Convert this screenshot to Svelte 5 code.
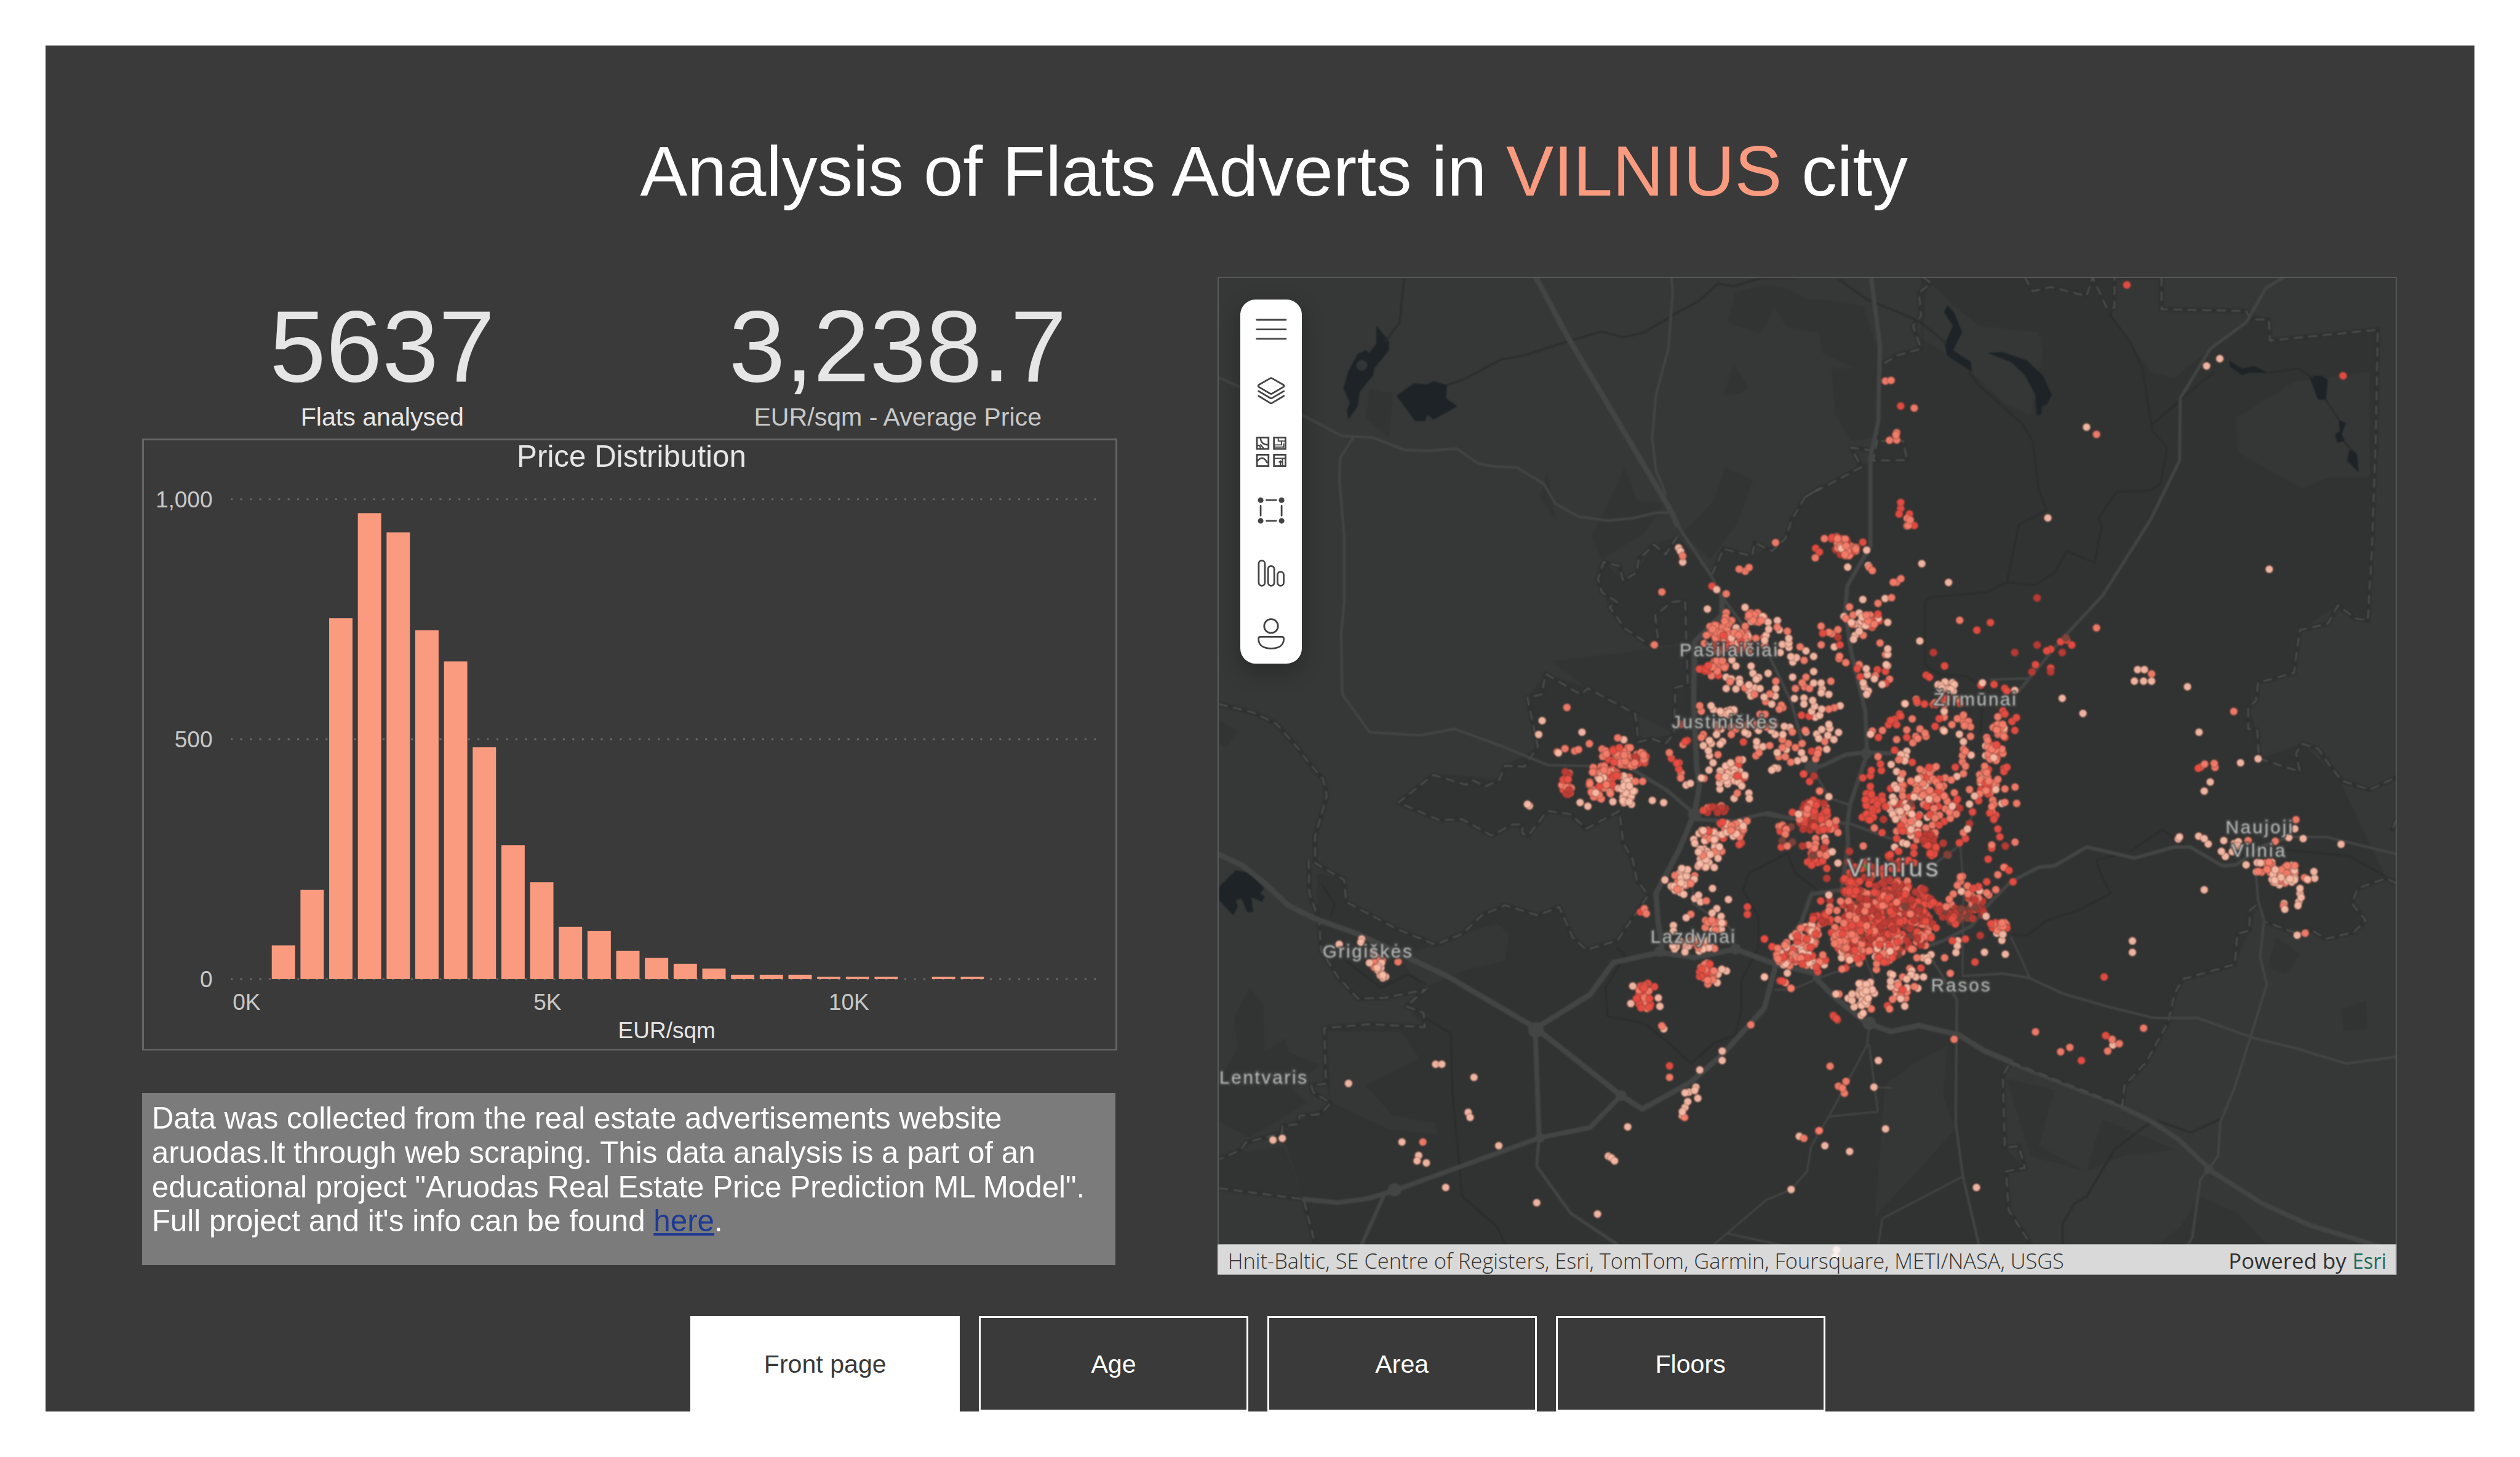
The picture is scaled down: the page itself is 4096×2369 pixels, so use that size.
<script>
  // ---- Histogram -------------------------------------------------------
  const bins = [70, 186, 752, 971, 931, 727, 662, 483, 279, 202, 109, 100, 59, 44, 32, 22, 9, 9, 9, 5, 5, 5, 0, 5, 5];
  const baseY = 890.5;
  const scaleY = 0.7905;
  const bars = bins
    .map((n, i) => ({ x: 213.5 + i * 47.27, h: n * scaleY }))
    .filter((b) => b.h > 0);
  const yTicks = [
    { label: '1,000', y: 100 },
    { label: '500', y: 495.3 },
    { label: '0', y: 890.5 }
  ];
  const xTicks = [
    { label: '0K', x: 172 },
    { label: '5K', x: 667.5 },
    { label: '10K', x: 1164 }
  ];

  // ---- Map geometry ----------------------------------------------------
  // Coordinates are digitised per sheet; "k<n>" switches the active sheet.
  const sheets = {
    4: [2000, 450, 1.568, 1.8447],
    5: [2950, 450, 1.5223, 1.8447],
    6: [2000, 1250, 1.568, 1.8023],
    7: [2950, 1250, 1.5223, 1.8023],
    10: [2900, 1150, 3, 2.8509],
    11: [2650, 850, 3, 3]
  };
  const place = (k, x, y) => {
    const [ox, oy, sx, sy] = sheets[k];
    return [ox + x / sx, oy + y / sy];
  };
  const read = (text) => {
    let k = 4;
    const out = [];
    for (const t of text.trim().split(/\s+/)) {
      if (t[0] === 'k') k = +t.slice(1);
      else {
        const [x, y] = t.split(',').map(Number);
        out.push(place(k, x, y));
      }
    }
    return out;
  };
  const line = (text) => read(text).map((p) => p[0].toFixed(1) + ',' + p[1].toFixed(1)).join(' ');

  const city = line(`k5 325,12 325,230 225,280 215,560 35,680 k4 1525,680 1475,805 1388,860 1315,838 1285,915 1195,800
    1135,825 1090,910 1055,935 1005,878 990,930 1020,1015 1060,1080 1130,1135 1222,1125 1222,1250 1190,1260 1187,1400 1095,1425
    1087,1340 965,1262 855,1218 808,1290 835,1440 750,1500 735,1540 k6 565,42 475,130 580,182 640,180 715,228 770,195 810,228 860,155
    920,165 960,208 1045,155 1055,250 1090,360 1120,405 1040,540 960,567 925,530 890,440 835,465 750,435 690,465 640,520 570,552
    470,505 340,425 335,360 265,340 265,480 275,570 320,650 370,712 545,685 495,735 543,797 283,800 288,965 300,1022 175,1110
    230,1308 260,1442 k7 600,1442 545,1340 538,1225 585,1215 535,1155 530,940 550,900 830,1030 835,970 890,900 945,780 960,700
    980,655 1112,610 1148,510 1165,435 1190,485 1340,525 1410,515 1440,480 1405,430 1420,385 1490,355 k5 1370,1530 1280,1430
    1172,1475 1168,1390 1145,1320 1170,1245 1260,1215 1275,1085 1370,1010 1445,1055 1455,850 1470,172 1200,205 1197,142 1140,115
    928,110 928,12`);

  const darkPatches = [
    'k4 1345,60 1420,35 1475,45 1540,85 1530,170 1480,165 1445,105 1410,185 1325,150',
    'k4 1320,590 1390,630 1350,760 1280,870 1210,790 1290,690',
    'k4 1340,275 1378,345 1360,365 1315,372',
    'k4 1060,590 1090,690 1160,700 1110,790 1000,870 975,800 1020,690',
    'k4 860,600 880,750 840,680',
    'k4 870,1180 1220,1130 1220,1250 1187,1400 1090,1340 960,1260',
    'k4 400,350 460,365 450,500 390,440',
    'k4 12,1360 60,1390 30,1440 12,1430',
    'k5 0,80 80,80 180,100 215,230 210,500 150,510 110,430 100,290 160,290 75,240 70,180 0,170',
    'k6 90,680 125,730 130,870 185,830 190,870 270,910 200,980 240,1020 90,1125 12,1075 12,950 60,860 50,770',
    'k7 540,950 660,985 620,1150 740,1225 780,1070 900,1130 960,1160 830,1180 740,1225 600,1180',
    'k7 1440,720 1445,800 1385,810 1380,740',
    'k7 1215,530 1275,580 1240,640 1195,620',
    'k7 1025,1300 1120,1350 1190,1442 920,1442 975,1390',
    'k6 180,1150 230,1308 12,1275 12,1180'
  ].map(line);

  const lightPatches = [
    'k5 1115,440 1260,330 1450,300 1450,620 1350,620 1280,655 1200,600 1120,545',
    'k5 810,20 928,20 928,110 1140,115 1150,140 1050,230 960,320 900,300 850,210 805,130',
    'k5 340,20 400,90 470,160 620,180 630,240 600,430 540,400 450,300 330,200',
    'k7 390,850 380,1000 410,1100 350,1180 210,1360 235,970 300,910 360,870',
    'k6 390,970 530,890 480,810 290,810 300,1020 450,1100 575,1115 570,1080 460,1060',
    'k6 730,490 760,520 750,600 640,630 545,680 470,590 570,552 640,520'
  ].map(line);

  const lakes = [
    'k4 418,160 450,205 450,235 412,290 410,310 375,360 370,405 345,445 342,415 350,395 333,350 345,300 370,245 390,235 400,242 418,215',
    'k4 470,372 515,335 550,338 565,328 600,340 598,380 627,405 565,445 550,430 543,450 518,450',
    'k5 392,98 408,120 428,180 405,235 450,270 452,300 390,250 385,215 405,160 382,118',
    'k5 490,242 530,240 590,265 630,310 653,370 640,400 628,405 626,430 614,430 612,370 585,310 550,270',
    'k5 1097,265 1130,290 1160,282 1195,303 1150,302 1130,310 1100,285',
    'k5 1298,312 1330,312 1345,325 1340,385 1320,385',
    'k5 1372,445 1390,455 1380,490 1388,510 1368,515 1363,490 1375,480',
    'k5 1400,530 1418,550 1422,605 1393,570',
    'k6 12,380 55,330 90,340 128,385 118,400 130,410 122,425 95,410 100,455 85,455 70,415 55,420 60,440 48,465 12,420'
  ].map(line);

  const streams = [
    'k4 490,12 478,150 440,210',
    'k4 600,340 650,320 740,262 800,250 900,212 1000,177 1055,195 1110,180 1180,130 1250,85 1300,32 1340,40 1410,15 1500,14',
    'k5 120,20 190,80 320,145 390,215',
    'k5 445,300 470,340 580,460 605,510 620,660 640,720 570,765 540,940 610,948 660,910 690,845 760,880 778,770 770,745 815,665 900,660 925,640 942,530 905,480 880,290 850,210 800,130 805,100',
    'k5 905,460 1000,360 1060,300',
    'k5 540,940 490,970 345,985 335,1000 335,1190 370,1220 440,1225 480,1260 475,1400',
    'k5 1195,303 1270,290 1310,320',
    'k5 1340,385 1375,450',
    'k5 1385,510 1405,540',
    'k7 820,285 765,300 775,340 800,400 720,450 640,480 590,525 550,520',
    'k7 850,275 930,210 990,262',
    'k7 1240,270 1400,290 1490,350',
    'k7 900,1080 810,1160 740,1300 710,1320 680,1380 680,1442',
    'k7 920,1075 1000,1110 1075,1070',
    'k6 545,770 610,815 615,1000 640,1300 730,1390 750,1442',
    'k6 1040,560 1060,585 1010,680 1015,765 1110,785 1170,840 1230,905 1290,845 1345,820 1360,750 1360,660 1405,560 1405,470 1365,390 1380,340 1480,280 1500,340 1568,400',
    'k6 275,370 310,430 300,470',
    'k6 340,600 430,680 500,640 545,670'
  ].map(line);

  const roads = [
    [9, 'k4 830,12 910,190 1180,725 1195,765'],
    [5, 'k4 1195,765 1285,925 1310,985'],
    [9, 'k4 1310,985 1310,1040 1240,1120 1237,1300 1245,1500 k6 1252,80 1240,160 1200,270 1140,400 1145,480 1155,560'],
    [5, 'k11 565,410 700,590 790,690 900,920 950,1110'],
    [4, 'k4 1180,12 1183,60 1172,230 1140,370 1130,500 1140,600 1165,670'],
    [4, 'k4 12,318 225,430 330,495 410,500 490,537 550,540 625,533 680,578 725,588 780,590 850,640 880,700 940,740 1015,752 1080,745 1140,728 1175,728'],
    [4, 'k4 358,500 325,560 322,620 335,800 335,1000 327,1100 330,1280 400,1395 530,1405 620,1385 740,1437 860,1495 970,1498'],
    [7, 'k5 200,12 222,220 218,450 198,560 198,830 140,950 135,1030 150,1150 185,1330 190,1460 k10 440,500 425,600 430,680 400,900 250,920 200,1050 90,1200 70,1260'],
    [5, 'k5 1235,12 1190,45 1140,150 1050,230 975,380 973,570 900,750 780,980 680,1110 570,1270'],
    [4, 'k5 590,1232 500,1235'],
    [9, 'k6 1345,565 1450,610 1560,640 k7 60,650 110,710 190,785 250,810 320,792 420,820 480,865 550,900'],
    [5, 'k7 550,905 830,1035'],
    [8, 'k7 830,1035 900,1075 970,1130 1060,1230 1180,1320 1300,1385 1480,1450'],
    [6, 'k7 480,450 550,365 620,322 660,318 740,262 860,295 960,262 1000,262 1080,318 1115,315 1180,260 1250,232'],
    [4, 'k7 1250,232 1340,232 1517,283'],
    [4, 'k7 430,645 530,638 595,650 680,697 800,738 910,770 1020,770 1160,830 1260,858 1390,905 1517,885'],
    [3, 'k7 550,530 575,590 595,645'],
    [4, 'k7 1165,345 1170,420 1185,480 1175,590 1192,670 1150,830 1110,980 1075,1080 1070,1180 1025,1250 1005,1420 995,1442'],
    [4, 'k7 350,590 415,715 412,1080 430,1240 470,1442'],
    [3, 'k7 430,1240 228,1365 218,1442'],
    [3, 'k7 195,790 190,850 95,1060 50,1150 k6 1530,1225 1489,1279 1425,1310 1290,1442'],
    [3, 'k6 1325,1410 1480,1448'],
    [3, 'k7 195,850 217,1048 95,1062'],
    [3, 'k7 207,975 250,977'],
    [7, 'k10 235,325 300,320 420,265 520,255 640,260'],
    [5, 'k10 0,545 100,560 250,575 440,590 640,660'],
    [4, 'k10 270,360 340,470 430,500'],
    [4, 'k10 870,770 985,690 1040,560'],
    [3, 'k10 985,700 1000,880 995,1300'],
    [3, 'k10 510,1210 560,1330'],
    [3, 'k10 70,1370 150,1370 300,1310 480,1250'],
    [6, 'k10 1100,1000 1040,1070 900,1140 810,1170'],
    [9, 'k6 12,285 70,315 130,370 190,435 260,475 370,520 600,645 830,800 970,700 1030,605 1150,575 1240,590 1345,565'],
    [9, 'k6 830,800 1050,1000 1105,1040 1230,960 1310,880 1420,740 1450,610'],
    [8, 'k6 828,800 838,1120'],
    [8, 'k6 1050,1000 970,1095 840,1125 470,1280 400,1305 320,1318 230,1308'],
    [6, 'k6 440,1290 380,1442'],
    [5, 'k6 838,1120 832,1210 920,1350 1040,1442'],
    [6, 'k6 1070,25 1170,95 1240,165'],
    [6, 'k6 1240,180 1340,185 1430,160 1490,178'],
    [3, 'k6 1235,350 1235,430 1330,500 1345,560']
  ].map(([w, d]) => ({ w, d: line(d) }));

  const junctions = [
    ['k6 830,805', 13], ['k6 1240,165', 11], ['k6 1050,1000', 9], ['k6 465,1280', 11],
    ['k10 250,325', 11], ['k7 195,785', 11], ['k6 840,1125', 8], ['k6 1345,565', 9],
    ['k7 1045,1220', 7], ['k10 520,260', 9], ['k6 1150,572', 9]
  ].map(([p, r]) => ({ p: read(p)[0], r }));

  const borders = [
    'k5 330,12 350,30 320,60 325,130 305,160 325,230 265,250 225,280 215,510 205,570 290,568 280,510 215,510',
    'k5 205,540 150,530 175,590 35,680 k4 1568,650 1525,680 1490,750 1475,805 1440,845 1395,820 1388,860 1315,838 1285,915',
    'k4 1195,800 1165,855 1135,825 1095,870 1090,910 1055,935 1045,890 1005,878 990,930 1000,970 1040,1000 1020,1015 1060,1080 1130,1135 1145,1110 1138,1040 1180,1000 1215,995 1222,1250 1190,1260 1187,1400 1165,1430 1130,1415 1095,1425 1087,1340 965,1262 945,1280 855,1218 845,1280 808,1290 835,1440 800,1500 750,1497 735,1540 700,1560 665,1540 650,1555 565,1525 k6 475,130 580,182 640,180 715,228 770,195 795,195 795,222 810,228 860,155 920,165 960,208 1045,155 1055,250 1080,300 1090,360 1120,405 1040,540 960,567 925,530 890,440 835,465 750,435 690,465 640,520 570,552 470,505 340,425 335,360 260,310 260,230 290,110 280,60 235,0 k4 220,1450 160,1370 100,1335 12,1310',
    'k6 243,300 245,400 270,480 275,570 320,650 370,712 440,710 545,685 495,735 540,755 543,797 400,788 283,800 288,965 250,970 255,990 300,1022 275,1055 220,1060 215,1085 175,1090 175,1110 80,1140 70,1160 12,1190',
    'k6 12,1275 230,1308 260,1442',
    'k5 585,12 605,55 650,42 740,70 755,12 790,105 810,105 810,12',
    'k5 928,12 928,110 1140,115 1150,140 1197,142 1200,205 1470,172 1465,500 1455,850 1445,1055 1415,1050 1370,1010 1345,1065 1275,1085 1260,1215 1170,1245 1165,1300 1145,1320 1145,1385 1168,1390 1172,1475 1275,1515 1265,1460 1280,1430 1320,1445 k7 1350,20 1380,65 1450,92 1517,55',
    'k7 1517,370 1490,355 1420,385 1405,430 1440,480 1410,515 1340,535 1300,505 1270,520 1190,485',
    'k7 1165,435 1150,450 1148,510 1118,520 1112,610 980,655 960,700 945,780 890,900 835,970 830,1030 550,900 530,940 535,1155 570,1150 585,1215 538,1225 545,1340 600,1442',
    'k7 1517,180 1505,215'
  ].map(line);

  // ---- Adverts ---------------------------------------------------------
  // Price classes, cheapest to most expensive.
  const palette = { a: '#f8bda8', b: '#f47d6a', c: '#e94d42', d: '#bd3b35', e: '#7a433b' };

  const sparse = {
    a: `k11 343,158 353,175 363,228 531,364 485,460 671,452 735,505 755,508 785,525 831,517 788,560 840,563 775,590 768,615 627,553 887,605 888,628 888,650
      855,635 845,675 897,695 907,722 925,700 972,667 1010,694 606,712 626,742 701,742 710,778 738,798 726,808 785,778 578,797
      603,805 643,807 645,825 578,853 626,855 690,835 690,865 700,890 745,853 720,850 823,853 820,890 765,895 803,930 906,797 1010,769
      1010,826 1047,826 1052,855 1085,882 1047,875 915,902 962,900 962,930 1005,912 1015,940 1050,955 1040,985 1018,995 1000,965
      1141,938 503,938 515,958 548,965 572,978 600,958 616,958 530,1080 560,1115 548,1128 495,1110 465,1135 490,1160 505,1125
      495,1185 513,1220 493,1256 685,1078 670,1070 738,1060 800,1060 820,1080 858,1080 865,1040 893,1045 728,1115 730,1138
      760,1140 875,1155 830,1170 972,1068 1025,1078 1035,1100 1050,1055 1085,1030 1090,1050 1080,1085 1110,1105 1133,1070
      1075,1153 950,1170 963,1200 930,1210 818,1245 803,1256 832,1247 380,1330 401,1322 600,1220 575,1235 548,1260 550,1290
      545,1320 547,1350 575,1290 590,1270 600,1300 585,1325 655,1335 658,1205 617,1396 690,1370 692,1397 455,1295 213,1406
      269,1417 72,1106 72,1285 75,1315 72,1335 125,1360 100,1335 70,1365 68,1390 108,1390 72,1417 110,1425 18,1412 1178,253
      1272,169 1280,245 1253,413 1363,408 1235,480 1250,500 1245,520 1215,535 1235,570 1215,590 1207,610 1328,507 1376,526
      1160,497 1112,647 1376,657 1376,685 1368,735 1375,740 1270,755 1275,785 1310,805 1255,825 1260,845 1280,865 1272,882 1348,833
      k10 712,27 905,62 900,150 905,155 541,170 980,170 1000,205 1038,268 720,250 715,275 710,295 690,265 643,312 670,345
      690,380 660,410 670,425 650,465 640,500 680,530 650,545 700,520 720,515 665,570 745,545 755,560 780,590 775,630 775,380
      830,380 968,368 878,410 830,475 945,508 822,560 660,480 1030,498 1200,140 1110,225 1110,270 1150,280 1090,380 1090,400
      1160,430 1055,460 1190,495 1020,615 700,680 720,685 660,700 315,657 330,730 352,722 380,775 335,463 185,545 335,925
      990,908 1080,905 1112,1025 1165,1105 1195,1110 1190,1138 1104,1194 1207,1203 972,1140 970,1165 963,1195
      840,1120 155,1120 220,1075 245,1140 125,1170 175,1215 130,1292 258,1258 398,1220 565,1215 635,1230 17,1310 840,1205
      820,1220 825,1235 800,1220 640,1295 650,1300 640,1330 640,1355 665,1370 670,1400 745,1280 740,1300 765,1310 803,1310
      775,1363 720,1320 710,1447 540,1335 520,1345 495,1355 550,1370 520,1375 450,1390 430,1410 450,1420 485,1395 530,1410
      500,1420 490,1440 525,1430 460,1450 505,1480 495,1490 370,1390 405,1130 400,1190
      k4 846,1360 837,1402 949,1395 888,1458
      k6 944,130 964,141 808,135 813,140 1163,360 1286,385 1327,418 1250,405 1240,415 1255,425 1297,445 1285,458 1308,468
      1218,472 1185,495 1185,512 1272,607 1310,625 1322,630 1298,665 1300,640 1080,675 1075,727 1146,710 1150,735 1160,802
      1311,868 1311,896 1253,924 1243,975 1215,992 1225,990 1248,1008 1222,1018 1215,1035 1208,1048 1208,1060 1240,985 1420,648
      1067,1093 1017,1180 1025,1185 1033,1194 1510,1121 571,907 587,907 670,946 346,964 655,1050 660,1065 484,1138 734,1149
      527,1178 523,1194 547,1200 597,1273 832,1318 989,1352 1489,1279 151,1132 175,1127 380,535 378,545 322,551 410,575
      k7 1262,208 973,232 970,238 1021,230 1035,237 1045,253 1084,243 1247,234 1283,237 1378,254 1078,275 1088,290 1140,315
      1312,355 1310,335 1275,400 1278,412 1272,425 1270,436 1275,385 1235,430 1237,447 1268,524 1035,389 855,541 855,575
      806,850 218,896 207,975 236,1099 84,1149 146,1166 464,1273 1050,69 1035,96 113,1458 110,1478
      k5 1074,260 1041,282 740,468 643,744 1198,900 327,883 394,940 322,1118 868,1205 885,1205 860,1240 883,1240 903,1240
      993,1257 679,1292 731,1338 1022,1395 1126,1488 1170,1476 479,1245 560,1268 284,1308`,
    b: `k11 363,198 822,132 642,263 672,273 691,255 578,385 260,376 223,637 578,478 575,500 570,520 605,517 590,535 560,550
      510,560 530,550 480,590 500,580 545,585 640,590 672,545 680,580 690,600 660,600 650,580 700,480 690,490 715,490 730,520
      710,515 765,500 700,505 740,525 725,605 765,600 880,570 830,550 470,630 520,720 560,715 545,745 570,750 505,790 535,725
      597,820 718,882 670,850 823,817 793,880 773,918 850,935 858,947 840,955 963,714 943,647 972,797 953,825 920,853 990,853
      965,845 1095,817 1085,955 1112,948 447,938 455,965 745,980 770,980 603,1080 465,1080 455,1095 537,1180 725,1185 740,1170
      793,1135 905,1068 855,1105 885,1125 855,1145 920,1145 953,1125 870,1190 838,1190 897,1217 968,1060 1065,1115 1035,1155
      1030,1175 1020,1200 640,1205 612,1245 630,1285 633,1370 468,1297 297,1170 355,1270 353,1295 365,1130 42,1097 165,1312
      130,1312 1018,207 1063,112 1300,270 1285,255 1403,328 1420,328 1441,310 1395,404 1328,432 1187,450 1270,490 1205,490
      1170,508 1290,500 1300,550 1310,535 1280,520 1255,590 1047,545 1085,575 1100,582 1130,562 1047,637 1138,693 1135,705
      1169,725 1338,628 1365,685 1235,735 1315,790 1385,807 1478,47 962,1275 1038,1360
      k10 747,98 600,152 550,155 670,195 785,145 815,180 810,165 775,190 750,210 765,180 720,150 1000,80 970,97 1000,110
      1025,110 1035,135 1005,130 943,125 1035,180 1000,240 1010,250 995,270 1010,320 1000,355 995,300 905,90 578,275 785,335
      810,345 850,330 865,322 835,350 700,355 680,290 740,390 760,400 800,400 770,430 800,430 760,450 850,380 910,375 940,385
      700,460 800,455 850,455 870,475 905,460 920,485 955,445 855,518 860,565 910,520 930,535 965,545 935,565 815,610 860,632
      740,580 715,590 770,665 670,625 1170,88 1165,150 1170,170 1200,180 1115,185 1150,225 1190,240 1195,260 1125,260 1165,285
      1140,240 1105,320 1080,360 1105,340 1170,382 1160,410 1115,350 1145,480 1030,430 1080,450 1205,427 1255,418 1205,490
      1263,495 1140,510 1140,530 1150,500 505,695 560,610 1000,632 1255,677 1140,690 1170,830 1200,795 995,838 985,840 970,880
      1020,882 1160,900 1115,915 1125,925 950,920 915,980 940,970 930,945 985,860 290,437 230,520 190,570 210,545 300,575
      270,660 235,690 265,705 380,632 320,675 130,695 120,640 295,1060 380,1040 335,1000 375,998 340,980 907,1220 935,1293
      770,1220 700,1310 705,1385 715,1410 650,1415 635,1460 545,1460 735,1270 757,1355 385,1390 148,1363 118,1335 570,1275
      485,1245 400,1273 1190,1055
      k4 910,1320 968,1430 940,1448 930,1452 885,1455 905,1445
      k6 1375,185 1310,275 1270,422 1110,445 1115,460 1230,462 1268,480 1155,793 1175,946 1214,1065 1385,790 1474,665
      1489,682 1522,1127 1560,1105 538,1138 474,603
      k7 1265,181 1145,243 1213,245 1234,437 1288,518 612,811 883,800 698,857 675,870 804,833 822,846 793,868 408,833 97,913
      137,958 118,972 128,978 133,993 70,1104
      k5 308,410 236,328 250,326 264,485 262,492 264,507 246,508 765,490 290,745 298,750 290,768 422,1055 765,1078 903,1218
      1109,1332 1036,1492 1025,1502 1060,1490 1062,1502 313,1295 315,1305`,
    c: `k11 508,347 567,615 520,630 650,620 463,755 490,750 540,788 950,985 988,990 663,1117 375,1115 385,1110 307,1198
      333,1222 345,1220 343,1250 175,1220 145,1222 640,1228 653,1303 635,1285 1000,1163 355,1030 50,1145 20,1160 35,1265
      1020,160 1038,178 1253,130 1300,520 1328,485 1055,580 1140,637 1225,755 1325,760 1365,768 1240,795 1365,828
      465,1455 500,1440
      k10 770,15 850,30 685,75 690,85 660,100 640,105 630,125 670,125 720,185 880,97 860,133 580,185 660,245 747,302 590,310
      545,340 595,340 540,365 503,375 705,410 830,325 960,325 880,380 640,425 1195,60 1205,75 1262,92 1254,152 1240,110
      1205,185 1215,325 1200,345 1200,330 1075,482 1045,535 970,475 960,495 540,415 540,440 520,450 520,475 545,480 520,505
      550,520 520,545 500,560 530,570 555,560 598,460 600,480 575,500 615,510 700,490 735,465 820,510 880,597 905,580 598,632
      690,600 700,625 670,660 680,720 755,700 755,730 1170,615 1180,652 1140,705 980,680 1010,660 1122,757 1225,810 1245,863
      1205,795 1115,863 1075,885 1120,450 1110,400 1130,400 1120,430 1130,540 1160,550 1150,570 210,357 240,392 258,480
      240,510 155,537 230,770 250,785 290,770 325,800 305,765 100,700 295,953 17,1132 55,1168 360,1495 372,1505 945,1140
      1010,1132 1057,1240 95,1328 625,1445 700,1370 630,740 1135,1060 1215,1080 865,1080 230,1220 280,1285 418,1268 790,1268
      k6 1360,250 1355,255 1376,440 1376,462 1420,535 1440,558 1100,455 1136,677 1175,912 1466,660
      k7 784,648 788,822 727,896 105,762 112,770 115,775
      k5 841,36 1383,312 274,404 274,697 274,715 270,732 296,732 308,767 499,1062 465,1085 384,1194 338,1222 346,1228 650,1143
      640,1148 690,1115 703,1130 675,1120 612,1190 650,1200 475,1252 508,1250 535,1262 540,1270 1020,1505`,
    d: `k11 1130,600 130,1195 555,1437 k10 262,367 605,570 982,518 1030,590 900,682 1207,695 437,720 325,847 205,695 310,705
      340,950 1083,1115 1095,955 920,735 790,1160 k6 1110,735 k5 616,987 356,1153 560,1153 616,1130 679,1153 603,1212 650,1212`,
    e: 'k10 148,605 105,670 155,677 258,740 925,738 740,495 k5 688,1108'
  };

  // Dense neighbourhoods: sheet, centre, radii, count, class mix.
  const dense = [
    [11, 560, 570, 75, 45, 22, 'bbba'], [11, 630, 600, 70, 35, 16, 'bbac'], [11, 530, 745, 50, 30, 10, 'bbc'],
    [11, 480, 755, 35, 12, 7, 'c'], [11, 640, 655, 150, 26, 16, 'bbc'], [11, 720, 500, 45, 25, 10, 'bba'],
    [11, 610, 1270, 75, 60, 26, 'aaab'], [11, 1170, 155, 55, 45, 28, 'bbbbcda'], [11, 1120, 115, 25, 15, 6, 'cb'],
    [11, 1240, 520, 50, 30, 10, 'aab'], [11, 1300, 520, 35, 35, 10, 'bbc'], [11, 640, 1035, 180, 22, 14, 'abb'],
    [11, 600, 975, 60, 20, 8, 'a'], [11, 100, 1190, 85, 48, 46, 'bbbbc'], [11, 20, 1310, 35, 60, 12, 'bbc'],
    [11, 80, 1350, 45, 60, 6, 'a'],
    [4, 1030, 1460, 38, 28, 20, 'bbcb'], [6, 910, 72, 20, 36, 22, 'ccdb'], [6, 1000, 70, 34, 58, 50, 'bbbbca'],
    [6, 1065, 95, 24, 42, 8, 'aab'], [6, 1288, 148, 32, 18, 10, 'cdb'], [6, 1312, 210, 58, 28, 24, 'bbaac'],
    [6, 1275, 250, 40, 42, 36, 'aaab'], [6, 1270, 300, 40, 32, 18, 'aaab'], [6, 1215, 350, 28, 32, 15, 'aab'],
    [6, 1200, 385, 25, 20, 12, 'aab'], [6, 1290, 495, 28, 17, 12, 'bba'], [6, 1240, 555, 62, 24, 26, 'aab'],
    [6, 1270, 638, 24, 32, 24, 'bbc'], [6, 1110, 702, 28, 42, 28, 'bccb'], [6, 425, 608, 28, 18, 12, 'aab'],
    [6, 432, 636, 16, 18, 9, 'a'], [6, 1350, 210, 25, 25, 10, 'aab'],
    [7, 1110, 260, 18, 20, 5, 'a'], [7, 1190, 325, 42, 20, 14, 'abb'], [7, 1250, 350, 48, 36, 34, 'aaab'],
    [5, 392, 1255, 28, 18, 14, 'a'], [5, 385, 1305, 55, 18, 8, 'bc'],
    [10, 270, 530, 72, 52, 34, 'cccbdd'], [10, 325, 600, 68, 34, 20, 'ccb'], [10, 230, 590, 42, 32, 14, 'cd'],
    [10, 110, 610, 32, 26, 8, 'cdb'], [10, 290, 720, 45, 60, 10, 'bcb'],
    [10, 600, 890, 120, 75, 44, 'cccddb'], [10, 450, 870, 50, 65, 26, 'ccd'], [10, 690, 930, 60, 100, 30, 'ccddb'],
    [10, 470, 980, 90, 80, 46, 'ccbddb'], [10, 620, 1010, 200, 100, 190, 'cccccdddbbee'], [10, 620, 1130, 190, 80, 110, 'cccddbbe'],
    [10, 460, 1130, 90, 110, 66, 'cccbbda'], [10, 310, 1035, 60, 22, 12, 'ccd'], [10, 400, 1120, 55, 65, 34, 'bbbac'],
    [10, 225, 1120, 60, 60, 32, 'bbbac'], [10, 140, 1200, 65, 60, 36, 'bbbaac'], [10, 250, 1230, 75, 45, 20, 'bbca'],
    [10, 830, 1000, 55, 65, 30, 'ccd'], [10, 960, 1025, 80, 38, 26, 'ddcee'], [10, 1060, 1010, 45, 35, 12, 'dce'],
    [10, 1050, 930, 35, 45, 12, 'dcb'], [10, 1180, 1070, 40, 25, 10, 'cdb'], [10, 800, 1110, 50, 60, 16, 'cdb'],
    [10, 832, 690, 34, 62, 30, 'ddcc'], [10, 590, 770, 170, 40, 22, 'cddc'], [10, 790, 910, 30, 22, 10, 'cdd'],
    [10, 620, 1195, 60, 45, 16, 'ccba'], [10, 600, 1235, 35, 25, 7, 'cb'],
    [10, 690, 520, 55, 45, 18, 'aabc'], [10, 800, 420, 110, 55, 22, 'bbac'], [10, 760, 590, 90, 60, 18, 'bac'],
    [10, 870, 500, 90, 60, 12, 'bc'], [10, 540, 510, 40, 70, 8, 'c'], [10, 1140, 250, 45, 60, 16, 'bbbc'],
    [10, 1120, 390, 50, 60, 20, 'bbbc'], [10, 1180, 140, 35, 45, 10, 'bcb'], [10, 505, 1390, 60, 55, 22, 'a'],
    [10, 690, 1380, 35, 50, 12, 'abb']
  ];

  let seed = 20231;
  const rnd = () => {
    seed = (seed * 1664525 + 1013904223) >>> 0;
    return seed / 4294967296;
  };
  const dots = [];
  for (const [k, cx, cy, rx, ry, n, mix] of dense) {
    for (let i = 0; i < n; i++) {
      const t = rnd() * Math.PI * 2;
      const r = Math.sqrt(rnd());
      const p = place(k, cx + Math.cos(t) * r * rx, cy + Math.sin(t) * r * ry);
      dots.push({ x: p[0], y: p[1], c: mix[Math.floor(rnd() * mix.length)], o: rnd() });
    }
  }
  for (const c of Object.keys(sparse)) {
    for (const [x, y] of read(sparse[c])) dots.push({ x, y, c, o: rnd() + 0.15 });
  }
  dots.sort((p, q) => p.o - q.o);

  const places = [
    { t: 'Pašilaičiai', x: 2766, y: 1081, w: 161, s: 30 },
    { t: 'Justiniškės', x: 2753, y: 1200, w: 174, s: 30 },
    { t: 'Žirmūnai', x: 3184, y: 1162, w: 136, s: 30 },
    { t: 'Vilnius', x: 3041, y: 1444, w: 151, s: 42 },
    { t: 'Lazdynai', x: 2718, y: 1553, w: 139, s: 30 },
    { t: 'Grigiškės', x: 2178, y: 1578, w: 147, s: 30 },
    { t: 'Rasos', x: 3180, y: 1633, w: 97, s: 30 },
    { t: 'Lentvaris', x: 2008, y: 1785, w: 144, s: 30 },
    { t: 'Naujoji', x: 3665, y: 1373, w: 110, s: 30 },
    { t: 'Vilnia', x: 3675, y: 1411, w: 88, s: 30 }
  ];

  const tabs = ['Front page', 'Age', 'Area', 'Floors'];
  let active = $state('Front page');
</script>

<div class="page">
  <main class="report">
    <h1>Analysis of Flats Adverts in <span>VILNIUS</span> city</h1>

    <div class="body">
      <section class="left">
        <div class="kpis">
          <div class="kpi">
            <div class="value">5637</div>
            <div class="label">Flats analysed</div>
          </div>
          <div class="kpi second">
            <div class="value">3,238.7</div>
            <div class="label">EUR/sqm - Average Price</div>
          </div>
        </div>

        <svg class="chart" viewBox="0 0 1606 1009">
          <rect class="frame" x="1.5" y="1.5" width="1603" height="1006" />
          <text class="chart-title" x="806" y="46.5" text-anchor="middle">Price Distribution</text>
          {#each yTicks as t}
            <line class="grid" x1="146" x2="1571" y1={t.y} y2={t.y} />
            <text class="tick" x="116" y={t.y + 13} text-anchor="end">{t.label}</text>
          {/each}
          {#each bars as b}
            <rect class="bar" x={b.x} y={baseY - b.h} width="38.4" height={b.h} />
          {/each}
          {#each xTicks as t}
            <text class="tick" x={t.x} y="941" text-anchor="middle">{t.label}</text>
          {/each}
          <text class="axis" x="864" y="988" text-anchor="middle">EUR/sqm</text>
        </svg>

        <p class="note">
          Data was collected from the real estate advertisements website<br />
          aruodas.lt through web scraping. This data analysis is a part of an<br />
          educational project "Aruodas Real Estate Price Prediction ML Model".<br />
          Full project and it's info can be found <a href="#project">here</a>.
        </p>
      </section>

      <section class="map">
        <svg class="canvas" viewBox="2005 456 1942 1644">
          <rect x="2005" y="456" width="1942" height="1644" fill="#363837" />
          <g class="soft">
            <polygon points={city} fill="#313332" />
            {#each darkPatches as d}<polygon points={d} fill="#323433" />{/each}
            {#each lightPatches as d}<polygon points={d} fill="#353736" />{/each}
            {#each lakes as d}<polygon points={d} fill="#1d2326" />{/each}
            <ellipse cx="2242.5" cy="602" rx="9" ry="9" fill="#323537" />
            {#each streams as d}<polyline class="stream" points={d} />{/each}
            {#each borders as d}<polyline class="halo" points={d} />{/each}
            {#each borders as d}<polyline class="border" points={d} />{/each}
            {#each roads as r}<polyline class="road" points={r.d} stroke-width={r.w} />{/each}
            {#each junctions as j}<circle cx={j.p[0]} cy={j.p[1]} r={j.r} fill="#434544" />{/each}
            {#each dots as d}<circle class="dot" cx={d.x} cy={d.y} r="6.4" fill={palette[d.c]} />{/each}
            <path d="M3068 1423l9 4v13z" fill="#3fae2a" />
            {#each places as p}
              <text class="place" x={p.x} y={p.y} font-size={p.s} textLength={p.w}>{p.t}</text>
            {/each}
          </g>
          <rect x="2005" y="2050" width="1942" height="50" fill="#fff" fill-opacity="0.81" />
          <text class="credit" x="2022" y="2090" textLength="1377" lengthAdjust="spacingAndGlyphs">Hnit-Baltic, SE Centre of Registers, Esri, TomTom, Garmin, Foursquare, METI/NASA, USGS</text>
          <text class="powered" x="3670" y="2090" textLength="194" lengthAdjust="spacingAndGlyphs">Powered by</text>
          <text class="powered esri" x="3874" y="2090" textLength="56" lengthAdjust="spacingAndGlyphs">Esri</text>
          <path d="M2006 2050V457H3946V2100" fill="none" stroke="#636463" stroke-width="1.6" />
        </svg>

        <div class="tools">
          <svg viewBox="2043 493 101 600" fill="none" stroke="#434343" stroke-width="2.8" stroke-linecap="round" stroke-linejoin="round">
            <g transform="translate(2030 480)">
              <path d="M40 46.4H88M40 62.2H88M40 77.8H88" />
              <path d="M62.2 142.8Q63.7 142 65.2 142.8L84 153.6Q86 155.5 84 157L65.2 168Q63.7 168.8 62.2 168L43.4 157Q41.6 155.5 43.4 153.6Z" />
              <path d="M43 163.8L62.4 175.4Q63.7 176.2 65 175.4L84.8 163.8M43 171.8L62.4 183.6Q63.7 184.4 65 183.6L84.8 171.8" />
              <g stroke-linejoin="miter" stroke-linecap="butt" stroke-width="2.8">
                <path d="M40.4 240.4H59.4V259H40.4ZM68.4 240.4H87.4V259H68.4ZM40.4 268.8H59.4V287.3H40.4ZM68.4 268.8H87.4V287.3H68.4Z" />
                <path d="M46.2 241Q46.5 252 59 252.6M40.8 253Q46 252.5 46.4 259M46 251.5L51.5 258.5" stroke-width="2.3" />
                <path d="M75.5 241V246.2H87M68.6 252.5H81V246.2M68.6 256H84.5V250" stroke-width="1.9" />
                <path d="M40.6 279.5L45 275.5Q50 272 54.5 277.5L57 281.5H59.4" stroke-width="2.5" />
                <path d="M68.4 274.6H87.4M82.4 274.6V287M76.3 280.6H82.4M79 278V287" stroke-width="2.1" />
              </g>
              <path d="M56 343.5H72M56 377.6H72M46.5 352.8V369M81 352.8V369" />
              <g fill="#434343" stroke="none">
                <circle cx="46.5" cy="343.5" r="4.6" /><circle cx="81" cy="343.5" r="4.6" />
                <circle cx="46.5" cy="377.6" r="4.6" /><circle cx="81" cy="377.6" r="4.6" />
              </g>
              <rect x="43.3" y="443" width="10.2" height="41.5" rx="5.1" />
              <rect x="58.7" y="452" width="10.2" height="32.5" rx="5.1" />
              <rect x="74.3" y="461.6" width="10.2" height="22.9" rx="5.1" />
              <circle cx="63.7" cy="551" r="11.4" />
              <path d="M46 568.6H81.5Q84.6 568.6 84.6 572C84.6 583 76 587.8 63.8 587.8S43 583 43 572Q43 568.6 46 568.6Z" />
            </g>
          </svg>
        </div>
      </section>
    </div>

    <nav class="tabs">
      {#each tabs as t}
        <button class:active={active === t} onclick={() => (active = t)}>{t}</button>
      {/each}
    </nav>
  </main>
</div>

<style>
  :global(html), :global(body) { margin: 0; overflow: hidden; background: #fff; }
  .page {
    zoom: 0.98699;
    box-sizing: border-box;
    width: 4150px;
    height: 2400px;
    padding: 75px;
    background: #fff;
    font-family: 'Liberation Sans', Arial, sans-serif;
  }
  .report {
    display: flex;
    flex-direction: column;
    width: 4000px;
    height: 2250px;
    background: #3a3a3a;
  }
  h1 {
    margin: 140px 0 107px;
    padding-left: 46px;
    font-size: 116.67px;
    line-height: 134px;
    font-weight: 400;
    text-align: center;
    color: #fff;
  }
  h1 span { color: #fa9b80; }
  .body {
    display: flex;
    justify-content: space-between;
    height: 1644px;
    padding: 0 128px 0 159px;
  }
  .left { display: flex; flex-direction: column; width: 1606px; }
  .kpis {
    display: grid;
    grid-template-columns: 791px 815px;
    height: 266px;
  }
  .kpi { padding-top: 25px; text-align: center; color: #e6e6e6; white-space: nowrap; }
  .kpi.second { padding-left: 92px; }
  .value { font-size: 166.67px; line-height: 180px; }
  .label { margin-top: 4px; font-size: 41.67px; line-height: 46px; }
  .second .label { color: #c8c8c8; }
  .chart { display: block; width: 1606px; height: 1009px; flex: none; }
  .frame { fill: none; stroke: #666; stroke-width: 3; }
  .chart-title { font-size: 50px; fill: #e6e6e6; }
  .tick { font-size: 37.5px; fill: #c8c8c8; }
  .axis { font-size: 37.5px; fill: #e6e6e6; }
  .grid { stroke: #666; stroke-width: 3.1; stroke-dasharray: 3.125 12.5; }
  .bar { fill: #fa9b80; }
  .note {
    box-sizing: border-box;
    width: 1603px;
    height: 284px;
    margin: 69px 0 0;
    padding: 14px 0 0 16px;
    background: #7b7b7b;
    color: #fff;
    font-size: 50px;
    line-height: 56.4px;
    white-space: nowrap;
  }
  .note a { color: #1f3a93; }
  .map { position: relative; width: 1942px; height: 1644px; }
  .canvas { display: block; width: 100%; height: 100%; }
  .soft { filter: blur(1px); }
  .stream { fill: none; stroke: #2b2d2c; stroke-width: 3; stroke-linejoin: round; }
  .halo { fill: none; stroke: #2f3130; stroke-width: 8; stroke-linejoin: round; }
  .border { fill: none; stroke: #4e504f; stroke-width: 2.6; stroke-dasharray: 15 9; }
  .road { fill: none; stroke: #434544; stroke-linejoin: round; stroke-linecap: round; }
  .dot { stroke: #70342c; stroke-width: 1.2; stroke-opacity: 0.5; fill-opacity: 0.95; }
  .place {
    fill: #b9bbba;
    stroke: #444645;
    stroke-width: 6;
    stroke-opacity: 0.7;
    stroke-linejoin: round;
    paint-order: stroke;
    font-family: 'Liberation Sans', Arial, sans-serif;
  }
  .credit { font-family: 'Open Sans', 'Noto Sans', sans-serif; font-weight: 300; font-size: 36px; fill: #323232; }
  .powered { font-family: 'Open Sans', 'Noto Sans', sans-serif; font-size: 36px; fill: #323232; }
  .esri { fill: #1a6b5c; }
  .tools {
    position: absolute;
    left: 38px;
    top: 37px;
    width: 101px;
    height: 600px;
    border-radius: 25px;
    background: #fff;
    box-shadow: 0 12px 36px rgba(0, 0, 0, 0.25);
  }
  .tools svg { display: block; width: 101px; height: 600px; }
  .tabs {
    display: flex;
    gap: 31.2px;
    margin: auto 0 0 1062px;
  }
  .tabs button {
    box-sizing: border-box;
    width: 443.8px;
    height: 157px;
    padding: 3px 0 0;
    border: 3.125px solid #fff;
    background: #3a3a3a;
    color: #fff;
    font: 41.67px 'Liberation Sans', Arial, sans-serif;
  }
  .tabs button.active { background: #fff; color: #3a3a3a; }
</style>
